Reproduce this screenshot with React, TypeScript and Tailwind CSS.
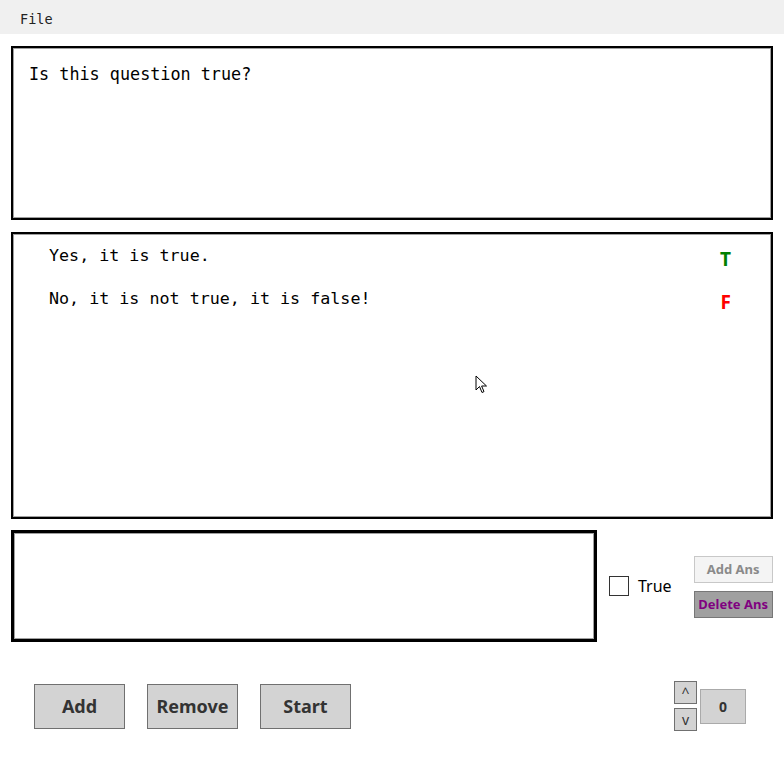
import React, { useState } from 'react';

const mono = { fontFamily: '"DejaVu Sans Mono", "Liberation Mono", monospace' };
const sans = { fontFamily: '"Noto Sans", "Open Sans", sans-serif' };

interface Answer {
  text: string;
  correct: boolean;
}

const answers: Answer[] = [
  { text: 'Yes, it is true.', correct: true },
  { text: 'No, it is not true, it is false!', correct: false },
];

const Cursor: React.FC = () => (
  <svg className="absolute left-[475px] top-[375px]" width="14" height="20" viewBox="0 0 14 20">
    <path d="M1 1 L1 15 L4.5 11.5 L7 17.5 L9 16.6 L6.6 11 L11.5 11 Z" fill="#fff" stroke="#000" strokeWidth="1" strokeLinejoin="round" />
  </svg>
);

const App: React.FC = () => {
  const [isTrue, setIsTrue] = useState(false);
  const [count] = useState(0);

  return (
    <div className="relative w-[784px] h-[758px] bg-white overflow-hidden" style={sans}>
      {/* menu bar */}
      <div className="h-[34px] bg-[#f0f0f0] flex items-center pl-[20px] pt-[4px] text-[13.5px] text-[#222]" style={mono}>
        File
      </div>

      <div className="flex flex-col pl-[11px] pt-[12px]">
        {/* question box */}
        <div className="w-[762px] h-[174px] border-2 border-black shadow-[inset_0_0_0_1px_#a0a0a0] pl-[16px] pt-[14px] text-[16.8px] text-black" style={mono}>
          Is this question true?
        </div>

        {/* answers list */}
        <div className="mt-[12px] w-[762px] h-[287px] border-2 border-black shadow-[inset_0_0_0_1px_#a0a0a0] pt-[10px] pl-[36px] pr-[40px] flex flex-col gap-[19px]">
          {answers.map((a) => (
            <div key={a.text} className="flex items-center justify-between h-[24px]">
              <span className="text-[16.7px] text-black" style={mono}>{a.text}</span>
              <span
                className={`text-[19px] font-bold ${a.correct ? 'text-[#008000]' : 'text-[#ff0000]'} mt-[6px]`}
                style={sans}
              >
                {a.correct ? 'T' : 'F'}
              </span>
            </div>
          ))}
        </div>

        {/* new answer row */}
        <div className="mt-[11px] flex items-center">
          <div className="w-[586px] h-[112px] border-[3px] border-black shadow-[inset_0_0_0_1px_#a0a0a0]" />
          <label className="ml-[12px] flex items-center gap-[9px] text-[16px] text-black cursor-default">
            <span
              onClick={() => setIsTrue(!isTrue)}
              className="w-[20px] h-[20px] border border-[#333] bg-white flex items-center justify-center text-[13px]"
            >
              {isTrue ? '✓' : ''}
            </span>
            True
          </label>
          <div className="ml-[22px] flex flex-col gap-[8px] mt-[2px]">
            <button className="w-[79px] h-[27px] bg-[#f4f4f4] border border-[#c8c8c8] text-[13px] font-bold text-[#8a8a8a]">
              Add Ans
            </button>
            <button className="w-[79px] h-[27px] bg-[#a0a0a0] border border-[#777] text-[13px] font-bold text-[#800080]">
              Delete Ans
            </button>
          </div>
        </div>

        {/* bottom controls */}
        <div className="mt-[39px] flex items-center">
          <div className="flex gap-[22px] ml-[23px]">
            {['Add', 'Remove', 'Start'].map((b) => (
              <button
                key={b}
                className="w-[91px] h-[45px] bg-[#d3d3d3] border border-[#707070] text-[18px] font-bold text-[#333]"
              >
                {b}
              </button>
            ))}
          </div>
          <div className="ml-[323px] flex items-center gap-[3px]">
            <div className="flex flex-col gap-[4px]">
              <button className="w-[23px] h-[23px] bg-[#d3d3d3] border border-[#707070] text-[14px] text-[#333] leading-none">
                ^
              </button>
              <button className="w-[23px] h-[23px] bg-[#d3d3d3] border border-[#707070] text-[14px] text-[#333] leading-none">
                v
              </button>
            </div>
            <div className="w-[46px] h-[35px] bg-[#d3d3d3] border border-[#aaa] flex items-center justify-center text-[14px] font-bold text-[#333]">
              {count}
            </div>
          </div>
        </div>
      </div>

      <Cursor />
    </div>
  );
};

export default App;
